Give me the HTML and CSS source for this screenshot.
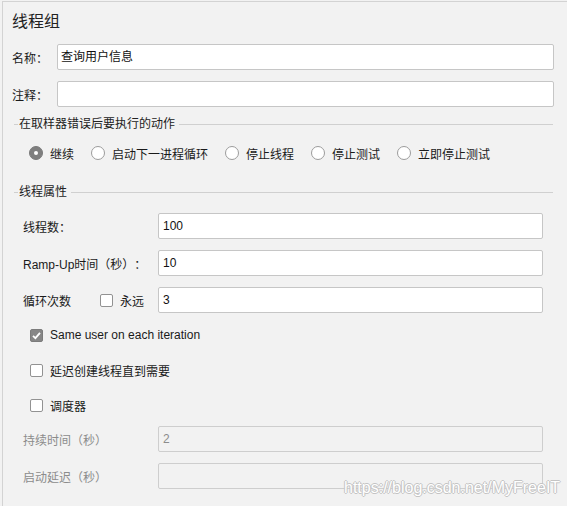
FILE: index.html
```html
<!DOCTYPE html>
<html lang="zh">
<head>
<meta charset="utf-8">
<title>线程组</title>
<link rel="stylesheet" href="styles.css">
</head>
<body>
<div class="panel">
  <div class="title">线程组</div>
  <div class="field first">
    <span class="flabel">名称：</span>
    <div class="input">查询用户信息</div>
  </div>
  <div class="field">
    <span class="flabel">注释：</span>
    <div class="input"></div>
  </div>

  <div class="group-head g1">
    <span class="dash"></span><span class="gtext">在取样器错误后要执行的动作</span><span class="gline"></span>
  </div>
  <div class="radios">
    <span class="radio on"></span><span class="rlabel">继续</span>
    <span class="radio"></span><span class="rlabel">启动下一进程循环</span>
    <span class="radio"></span><span class="rlabel">停止线程</span>
    <span class="radio"></span><span class="rlabel">停止测试</span>
    <span class="radio"></span><span class="rlabel">立即停止测试</span>
  </div>

  <div class="group-head g2">
    <span class="dash"></span><span class="gtext">线程属性</span><span class="gline"></span>
  </div>
  <div class="props">
    <div class="prow first">
      <span class="plabel">线程数：</span>
      <div class="input num">100</div>
    </div>
    <div class="prow">
      <span class="plabel">Ramp-Up时间（秒）：</span>
      <div class="input num">10</div>
    </div>
    <div class="prow">
      <span class="plabel"><span class="loopname">循环次数</span><span class="check"></span><span class="clabel">永远</span></span>
      <div class="input num">3</div>
    </div>
    <div class="crow first">
      <span class="check on"><svg viewBox="0 0 13 13" width="13" height="13"><path d="M3 6.8 L5.4 9.2 L10 3.8" fill="none" stroke="#fff" stroke-width="1.8"/></svg></span>
      <span class="clabel">Same user on each iteration</span>
    </div>
    <div class="crow">
      <span class="check"></span><span class="clabel">延迟创建线程直到需要</span>
    </div>
    <div class="crow">
      <span class="check"></span><span class="clabel">调度器</span>
    </div>
    <div class="prow dis first-dis">
      <span class="plabel">持续时间（秒）</span>
      <div class="input num disabled">2</div>
    </div>
    <div class="prow dis">
      <span class="plabel">启动延迟（秒）</span>
      <div class="input num disabled"></div>
    </div>
  </div>
</div>
<div class="watermark">https://blog.csdn.net/MyFreeIT</div>
</body>
</html>
```

FILE: styles.css
```css
html, body {
  margin: 0;
  padding: 0;
  background: #f2f2f2;
}
body {
  position: relative;
  width: 567px;
  height: 506px;
  overflow: hidden;
  font-family: "Liberation Sans", "Noto Sans CJK SC", sans-serif;
  font-size: 12px;
  color: #1a1a1a;
  text-spacing-trim: space-all;
  font-feature-settings: "halt" 0;
}
.panel {
  margin: 1px 0 0 2px;
  height: 505px;
  box-sizing: border-box;
  border-top: 1px solid #d3d3d3;
  border-left: 1px solid #d3d3d3;
  padding: 0 13px 0 9px;
}
.title {
  margin-top: 10px;
  height: 20px;
  line-height: 20px;
  font-size: 16px;
  color: #222;
}
.field {
  display: flex;
  align-items: center;
  margin-top: 11px;
  height: 26px;
}
.field.first { margin-top: 12px; }
.flabel {
  width: 45px;
  flex: none;
}
.input {
  flex: 1;
  height: 26px;
  box-sizing: border-box;
  background: #fff;
  border: 1px solid #c6c6c6;
  border-radius: 2px;
  padding-left: 3px;
  line-height: 24px;
  color: #111;
}
.input.num { padding-left: 4px; }
.input.disabled {
  background: #f2f2f2;
  border-color: #cecece;
  color: #8c8c8c;
}
.group-head {
  display: flex;
  align-items: center;
  height: 16px;
  padding-left: 2px;
  padding-right: 1px;
}
.g1 { margin-top: 9px; }
.g2 { margin-top: 21px; }
.dash {
  width: 4px;
  height: 1px;
  background: #cfcfcf;
  flex: none;
}
.gtext {
  padding: 0 4px 0 1px;
  line-height: 16px;
  color: #222;
}
.gline {
  flex: 1;
  height: 1px;
  background: #d0d0d0;
}
.radios {
  display: flex;
  align-items: center;
  height: 20px;
  margin-top: 11px;
  padding-left: 17px;
}
.radio {
  width: 14px;
  height: 14px;
  box-sizing: border-box;
  border-radius: 50%;
  border: 1px solid #9c9c9c;
  background: #fff;
  flex: none;
  position: relative;
}
.radio.on {
  background: #7f7f7f;
  border-color: #7a7a7a;
}
.radio.on::after {
  content: "";
  position: absolute;
  left: 4px;
  top: 4px;
  width: 4px;
  height: 4px;
  border-radius: 50%;
  background: #fff;
}
.rlabel {
  margin-left: 7px;
  margin-right: 17px;
}
.props {
  padding: 0 11px 0 11px;
}
.prow {
  display: flex;
  align-items: center;
  height: 26px;
  margin-top: 11px;
}
.prow.first { margin-top: 13px; }
.prow.first-dis { margin-top: 11px; }
.plabel {
  width: 135px;
  flex: none;
  display: flex;
  align-items: center;
  white-space: nowrap;
}
.prow.dis .plabel { color: #8c8c8c; }
.loopname {
  width: 77px;
  flex: none;
}
.check {
  width: 13px;
  height: 13px;
  box-sizing: border-box;
  border: 1px solid #929292;
  border-radius: 2px;
  background: #fff;
  flex: none;
  display: flex;
}
.check.on {
  background: #878787;
  border-color: #7c7c7c;
}
.check.on svg { margin: -1px; }
.clabel { margin-left: 7px; }
.crow {
  display: flex;
  align-items: center;
  height: 20px;
  margin-top: 15px;
  padding-left: 7px;
}
.crow.first { margin-top: 12px; }
.watermark {
  position: absolute;
  left: 344px;
  top: 479px;
  font-size: 16px;
  color: #ffffff;
  text-shadow: 1px 0 0 #c4c4c4, -1px 0 0 #c4c4c4, 0 1px 0 #c4c4c4, 0 -1px 0 #c4c4c4;
  white-space: nowrap;
}
```
